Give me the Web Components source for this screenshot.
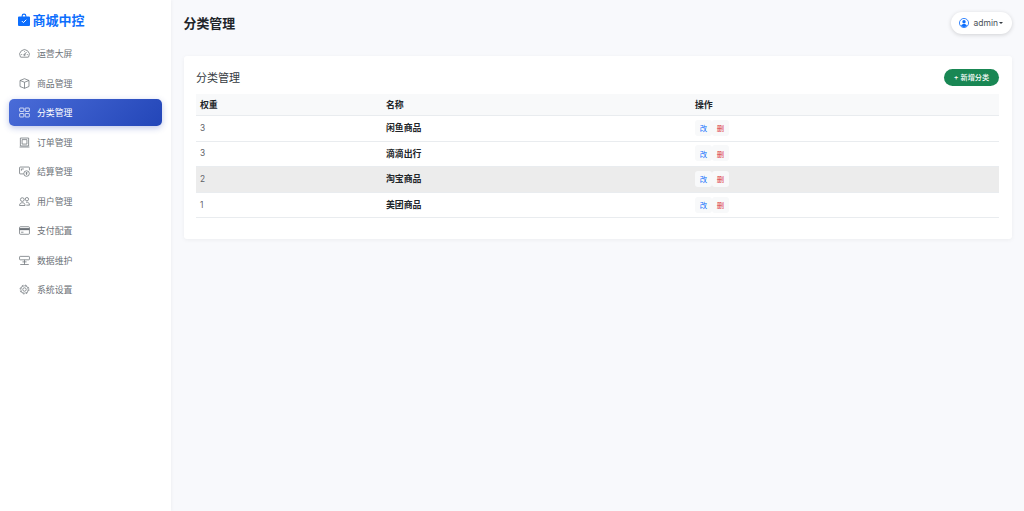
<!DOCTYPE html>
<html lang="zh-CN">
<head>
<meta charset="utf-8">
<title>分类管理</title>
<style>
html, body { margin: 0; height: 100%; }
body { font-family: Inter, Roboto, "Noto Sans CJK SC", sans-serif; background: #f8f9fc; overflow: hidden; }
</style>
</head>
<body>
<admin-app>
  <side-bar slot="side">
    <nav-item icon="gauge">运营大屏</nav-item>
    <nav-item icon="box">商品管理</nav-item>
    <nav-item icon="grid" active>分类管理</nav-item>
    <nav-item icon="order">订单管理</nav-item>
    <nav-item icon="settle">结算管理</nav-item>
    <nav-item icon="people">用户管理</nav-item>
    <nav-item icon="card">支付配置</nav-item>
    <nav-item icon="hdd">数据维护</nav-item>
    <nav-item icon="gear">系统设置</nav-item>
  </side-bar>
  <top-bar slot="top">分类管理</top-bar>
  <category-card>
    <category-row weight="3" name="闲鱼商品"></category-row>
    <category-row weight="3" name="滴滴出行"></category-row>
    <category-row weight="2" name="淘宝商品" hover></category-row>
    <category-row weight="1" name="美团商品"></category-row>
  </category-card>
</admin-app>

<script>
// icons for the sidebar, all on a 16 box and stroked with currentColor
const ICONS = {
  gauge: '<path d="M2 13a7 7 0 1 1 12 0 1 1 0 0 1-.8.400H2.800A1 1 0 0 1 2 13z"/><path d="M8 9.500l3-3.700"/><circle cx="8" cy="10" r="1.100"/><path d="M3.200 9.500h1.400M11.400 9.500h1.400M8 4.200v1.300"/>',
  box: '<path d="M8 1l6.500 2.600v8.800L8 15l-6.500-2.600V3.600z"/><path d="M1.500 3.600L8 6.200l6.500-2.600M8 6.200V15"/>',
  grid: '<rect x="1" y="1.500" width="6" height="5" rx=".6"/><rect x="9" y="1.500" width="6" height="5" rx=".6"/><rect x="1" y="9.500" width="6" height="5" rx=".6"/><rect x="9" y="9.500" width="6" height="5" rx=".6"/>',
  order: '<path d="M2 1.500h12v11.500H2zM.8 14.600h14.400"/><path d="M4.500 3.800h7v6.500h-7z"/>',
  settle: '<path d="M6.800 11.500H1.600a.8.800 0 0 1-.8-.8V2.300c0-.4.400-.8.800-.8h12.800c.4 0 .8.400.8.800v4"/><path d="M3.500 4.300h3.500M3.500 4.300v2.500"/><circle cx="11" cy="11" r="4"/><path d="M11 8.800v4.400M9.600 10.200h2.800"/>',
  people: '<circle cx="4.800" cy="5.200" r="2.700"/><circle cx="11.500" cy="4.600" r="2.400"/><path d="M.8 13.800c0-2.800 1.700-4 4-4s4 1.200 4 4zM10.200 9c3-.4 5 1 5 4.300h-4.500"/>',
  card: '<rect x=".8" y="2.500" width="14.400" height="11" rx="1.300"/><path d="M.8 6h14.400" stroke-width="3"/><path d="M3 10.500h3.500"/>',
  hdd: '<rect x=".8" y="2" width="14.400" height="5" rx="1"/><path d="M8 7v6.800M1.800 13.800h12.400M5 10h6"/>',
  gear: '<circle cx="8" cy="8" r="2.500"/><circle cx="8" cy="8" r="5.400" stroke-width=".9"/><circle cx="8" cy="8" r="6.400" stroke-width="1.200" stroke-dasharray="2.500 2.530"/>'
};

// page shell, sidebar on the left and the content column next to it
class AdminApp extends HTMLElement {
  constructor() {
    super();
    this.attachShadow({ mode: 'open' });
    this.shadowRoot.innerHTML = `
      <style>
        :host { display: flex; height: 511px; width: 1024px; }
        main { flex: 1; min-width: 0; padding: 0 12.500px; display: flex; flex-direction: column; }
      </style>
      <slot name="side"></slot>
      <main>
        <slot name="top"></slot>
        <slot></slot>
      </main>`;
  }
}

class SideBar extends HTMLElement {
  constructor() {
    super();
    this.attachShadow({ mode: 'open' });
    this.shadowRoot.innerHTML = `
      <style>
        :host { display: flex; flex-direction: column; width: 171px; flex: none; box-sizing: border-box; height: 100%; background: #fff; box-shadow: 1px 0 3px rgba(0,0,0,.04); }
        .brand { display: flex; align-items: center; gap: 3px; height: 39px; margin-bottom: 1px; padding-left: 17.500px; color: #0d6efd; font-size: 13px; font-weight: 700; }
        svg { width: 12px; height: 13px; fill: #0d6efd; }
        nav { display: flex; flex-direction: column; gap: 2.500px; padding: 0 9px; }
      </style>
      <div class="brand">
        <svg viewBox="0 0 12 13"><path d="M3.600 3.400V3a2.400 2.400 0 0 1 4.800 0v.400H11a1 1 0 0 1 1 1V12a1 1 0 0 1-1 1H1a1 1 0 0 1-1-1V4.400a1 1 0 0 1 1-1zM4.700 3.400h2.600V3a1.300 1.300 0 0 0-2.600 0z"/><path d="M3.800 8l1.600 1.600 2.900-2.900" fill="none" stroke="#fff" stroke-width="1"/></svg>
        <span>商城中控</span>
      </div>
      <nav><slot></slot></nav>`;
  }
}

class NavItem extends HTMLElement {
  constructor() {
    super();
    this.attachShadow({ mode: 'open' });
  }
  connectedCallback() {
    const icon = ICONS[this.getAttribute('icon')] || '';
    this.shadowRoot.innerHTML = `
      <style>
        :host { display: flex; align-items: center; gap: 7.500px; height: 27px; padding-left: 9.500px; border-radius: 5px; color: #6c7278; font-size: 8.900px; }
        :host([active]) { color: #fff; background: linear-gradient(135deg, #4a6cd8, #2346b8); box-shadow: 0 2px 6px rgba(40,70,180,.3); }
        svg { width: 11px; height: 11px; flex: none; fill: none; stroke: currentColor; stroke-width: 1.100; }
      </style>
      <svg viewBox="0 0 16 16">${icon}</svg>
      <span><slot></slot></span>`;
  }
}

class TopBar extends HTMLElement {
  constructor() {
    super();
    this.attachShadow({ mode: 'open' });
    this.shadowRoot.innerHTML = `
      <style>
        :host { display: flex; align-items: center; justify-content: space-between; height: 46px; margin-bottom: 10px; color: #212529; }
        h1 { margin: 0 0 2px; font-size: 12.900px; font-weight: 700; }
        .user { display: flex; align-items: center; gap: 4.500px; height: 22px; width: 60.500px; box-sizing: border-box; padding: 0 8px; background: #fff; border-radius: 11px; box-shadow: 0 1px 4px rgba(0,0,0,.16); font-size: 8.500px; color: #495057; }
        svg { width: 10px; height: 10px; flex: none; }
        i { width: 0; height: 0; border: 2.200px solid transparent; border-top-color: #343a40; border-bottom: 0; margin-left: -3.500px; }
      </style>
      <h1><slot></slot></h1>
      <div class="user">
        <svg viewBox="0 0 16 16"><circle cx="8" cy="8" r="7.300" fill="#fff" stroke="#0d6efd" stroke-width="1.300"/><circle cx="8" cy="6" r="2.700" fill="#0d6efd"/><path d="M3.300 12.400c.8-1.900 2.500-2.800 4.700-2.800s3.900.9 4.700 2.800a6.500 6.500 0 0 1-9.400 0z" fill="#0d6efd"/></svg>
        <span>admin</span><i></i>
      </div>`;
  }
}

class CategoryCard extends HTMLElement {
  constructor() {
    super();
    this.attachShadow({ mode: 'open' });
    this.shadowRoot.innerHTML = `
      <style>
        :host { display: block; box-sizing: border-box; height: 183px; padding: 12px 12.500px; background: #fff; border-radius: 3px; box-shadow: 0 1px 4px rgba(0,0,0,.05); }
        .head { display: flex; align-items: center; justify-content: space-between; height: 18px; margin-bottom: 8px; }
        h2 { margin: 0; font-size: 11px; font-weight: 400; color: #343a40; }
        button { height: 17px; width: 55px; padding: 0; border: 0; border-radius: 9px; background: #198754; color: #fff; font: 500 7.200px Inter, "Noto Sans CJK SC", sans-serif; }
        .row { display: grid; grid-template-columns: 186px 309px 1fr; align-items: center; height: 22px; padding: 0 0 1px 4px; background: #f8f9fa; border-bottom: 1px solid #e9ecef; box-sizing: border-box; font-size: 8.900px; font-weight: 700; color: #212529; }
      </style>
      <div class="head">
        <h2>分类管理</h2>
        <button>+ 新增分类</button>
      </div>
      <div class="row"><span>权重</span><span>名称</span><span>操作</span></div>
      <slot></slot>`;
  }
}

class CategoryRow extends HTMLElement {
  constructor() {
    super();
    this.attachShadow({ mode: 'open' });
  }
  connectedCallback() {
    this.shadowRoot.innerHTML = `
      <style>
        :host { display: grid; grid-template-columns: 186px 309px 1fr; align-items: center; box-sizing: border-box; height: 25.600px; padding: 0 0 1px 4px; border-bottom: 1px solid #e9ecef; font-size: 8.900px; color: #212529; }
        :host([hover]) { background: #ececec; }
        .w { color: #5f6368; font-size: 8.300px; }
        .n { font-weight: 700; }
        .ops { display: flex; }
        a { display: flex; align-items: center; justify-content: center; width: 17px; height: 16px; background: #f8f9fa; border-radius: 3px; font-size: 7.400px; }
        .e { color: #0d6efd; }
        .d { color: #dc3545; }
      </style>
      <span class="w">${this.getAttribute('weight')}</span>
      <span class="n">${this.getAttribute('name')}</span>
      <span class="ops"><a class="e">改</a><a class="d">删</a></span>`;
  }
}

customElements.define('admin-app', AdminApp);
customElements.define('side-bar', SideBar);
customElements.define('nav-item', NavItem);
customElements.define('top-bar', TopBar);
customElements.define('category-card', CategoryCard);
customElements.define('category-row', CategoryRow);
</script>
</body>
</html>
